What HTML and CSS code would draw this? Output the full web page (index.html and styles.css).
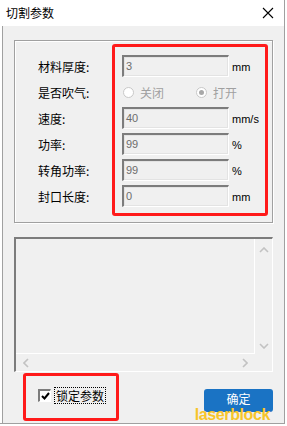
FILE: index.html
```html
<!DOCTYPE html>
<html lang="zh-CN">
<head>
<meta charset="UTF-8" />
<title>切割参数</title>
<link rel="stylesheet" href="styles.css">
</head>
<body>
<div class="window">
  <div class="titlebar">
    <span class="title">切割参数</span>
    <svg class="close" width="12" height="12" viewBox="0 0 12 12">
      <path d="M1 1 L11 11 M11 1 L1 11" stroke="#000" stroke-width="1.1" fill="none"/>
    </svg>
  </div>

  <div class="client">
    <div class="group">
      <div class="mark mark-params"></div>
      <div class="form">
        <label>材料厚度:</label>
        <div class="field">3</div>
        <span class="unit">mm</span>

        <label>是否吹气:</label>
        <div class="radios">
          <span class="radio"></span><span class="radio-text">关闭</span>
          <span class="radio checked"></span><span class="radio-text">打开</span>
        </div>

        <label>速度:</label>
        <div class="field">40</div>
        <span class="unit">mm/s</span>

        <label>功率:</label>
        <div class="field">99</div>
        <span class="unit">%</span>

        <label>转角功率:</label>
        <div class="field">99</div>
        <span class="unit">%</span>

        <label>封口长度:</label>
        <div class="field">0</div>
        <span class="unit">mm</span>
      </div>
    </div>

    <div class="logbox">
      <div class="log-main">
        <div class="log-area"></div>
        <div class="vscroll">
          <svg width="10" height="6" viewBox="0 0 10 6"><path d="M1 5 L5 1 L9 5" stroke="#c2c2c2" stroke-width="1.6" fill="none"/></svg>
          <svg width="10" height="6" viewBox="0 0 10 6"><path d="M1 1 L5 5 L9 1" stroke="#c2c2c2" stroke-width="1.6" fill="none"/></svg>
        </div>
      </div>
      <div class="hscroll">
        <svg width="6" height="10" viewBox="0 0 6 10"><path d="M5 1 L1 5 L5 9" stroke="#c2c2c2" stroke-width="1.6" fill="none"/></svg>
        <svg width="6" height="10" viewBox="0 0 6 10"><path d="M1 1 L5 5 L1 9" stroke="#c2c2c2" stroke-width="1.6" fill="none"/></svg>
      </div>
    </div>

    <div class="footer">
      <div class="mark mark-lock"></div>
      <div class="lock">
        <span class="checkbox">
          <svg width="9" height="8" viewBox="0 0 9 8"><path d="M1 4 L3.5 6.5 L8 1" stroke="#000" stroke-width="2" fill="none"/></svg>
        </span>
        <span class="lock-text">锁定参数</span>
      </div>
      <button class="ok">确定</button>
      <span class="watermark">laserblock</span>
    </div>
  </div>
</div>
</body>
</html>
```

FILE: styles.css
```css
* {
  margin: 0; padding: 0; box-sizing: border-box;
}
body {
  background: #ffffff;
  font-family: "Noto Sans CJK SC", "Noto Sans", sans-serif;
  font-size: 12px;
  color: #000;
  width: 287px;
  height: 426px;
  overflow: hidden;
}
.window {
  width: 285px;
  height: 424px;
  border-right: 1px solid #a0a0a0;
  border-bottom: 1px solid #a0a0a0;
  display: flex;
  flex-direction: column;
}
.titlebar {
  height: 26px;
  background: #fff;
  display: flex;
  align-items: center;
  justify-content: space-between;
  padding: 0 10px 0 6px;
}
.title {
  font-size: 12px;
  line-height: 14px;
}
.client {
  flex: 1;
  margin-left: 2px;
  border-left: 1px solid #a0a0a0;
  background: #f0f0f0;
  padding: 14px 10px 0 11px;
}

/* etched group box */
.group {
  position: relative;
  width: 259px;
  height: 183px;
  border: 1px solid #a0a0a0;
  box-shadow: inset 1px 1px 0 #fff, 1px 1px 0 #fff;
  padding: 14px 0 0 23px;
}
.mark {
  position: absolute;
  border: 3px solid #ff1a1a;
  border-radius: 3px;
}
.mark-params {
  left: 97px;
  top: 3px;
  width: 156px;
  height: 172px;
}
.form {
  display: grid;
  grid-template-columns: 84px 107px auto;
  grid-auto-rows: 22px;
  row-gap: 4px;
  align-items: center;
}
.form label {
  font-size: 12px;
}
.field {
  height: 22px;
  border-top: 2px solid #7c7c7c;
  border-left: 2px solid #7c7c7c;
  border-bottom: 1px solid #fff;
  border-right: 1px solid #fff;
  box-shadow: 1px 1px 0 #e3e3e3 inset, -1px -1px 0 #e3e3e3 inset;
  background: #f0f0f0;
  color: #6d6d6d;
  font-family: "Liberation Sans", "Noto Sans", sans-serif;
  font-size: 11px;
  line-height: 18px;
  padding-left: 2px;
}
.unit {
  font-family: "Liberation Sans", "Noto Sans", sans-serif;
  font-size: 11px;
  padding-left: 3px;
  padding-top: 2px;
}
.radios {
  grid-column: span 2;
  display: flex;
  align-items: center;
  padding-left: 1px;
  color: #a0a0a0;
  white-space: nowrap;
}
.radio {
  flex: none;
  width: 11px;
  height: 11px;
  border-radius: 50%;
  border: 1px solid #c8c8c8;
  background: #fff;
  display: flex;
  align-items: center;
  justify-content: center;
}
.radio.checked::after {
  content: "";
  width: 5px;
  height: 5px;
  border-radius: 50%;
  background: #a8a8a8;
}
.radio-text {
  margin-left: 6px;
  margin-right: 32px;
}

/* log box with scroll bars */
.logbox {
  margin-top: 14px;
  width: 259px;
  height: 135px;
  border-top: 2px solid #7c7c7c;
  border-left: 2px solid #7c7c7c;
  border-right: 1px solid #fff;
  border-bottom: 1px solid #fff;
  display: flex;
  flex-direction: column;
}
.log-main {
  flex: 1;
  display: flex;
}
.log-area {
  flex: 1;
  border-right: 1px solid #fff;
  border-bottom: 1px solid #fff;
}
.vscroll {
  width: 17px;
  display: flex;
  flex-direction: column;
  justify-content: space-between;
  align-items: center;
  padding: 8px 0 5px;
}
.hscroll {
  height: 17px;
  display: flex;
  justify-content: space-between;
  align-items: center;
  padding: 0 24px 0 7px;
}

/* bottom row */
.footer {
  position: relative;
  height: 51px;
  display: flex;
  align-items: flex-start;
  justify-content: space-between;
  padding: 16px 1px 0 24px;
}
.mark-lock {
  left: 9px;
  top: 1px;
  width: 96px;
  height: 48px;
}
.lock {
  display: flex;
  align-items: center;
}
.checkbox {
  width: 13px;
  height: 13px;
  border-top: 2px solid #7c7c7c;
  border-left: 2px solid #7c7c7c;
  border-right: 1px solid #fff;
  border-bottom: 1px solid #fff;
  background: #fff;
  display: flex;
  align-items: center;
  justify-content: center;
}
.lock-text {
  margin-left: 4px;
  padding: 0 1px;
  outline: 1px dotted #000;
  line-height: 15px;
  font-size: 12px;
}
.ok {
  width: 69px;
  height: 23px;
  margin-top: 1px;
  background: #1a73c4;
  color: #fff;
  border: none;
  border-radius: 3px;
  font-family: "Noto Sans CJK SC", sans-serif;
  font-size: 12px;
  line-height: 20px;
  padding-bottom: 3px;
}
.watermark {
  position: absolute;
  right: 4px;
  top: 35px;
  color: #f7c52a;
  font-family: "Liberation Sans", sans-serif;
  font-weight: bold;
  font-size: 16px;
  line-height: 16px;
  letter-spacing: -0.4px;
}
```
